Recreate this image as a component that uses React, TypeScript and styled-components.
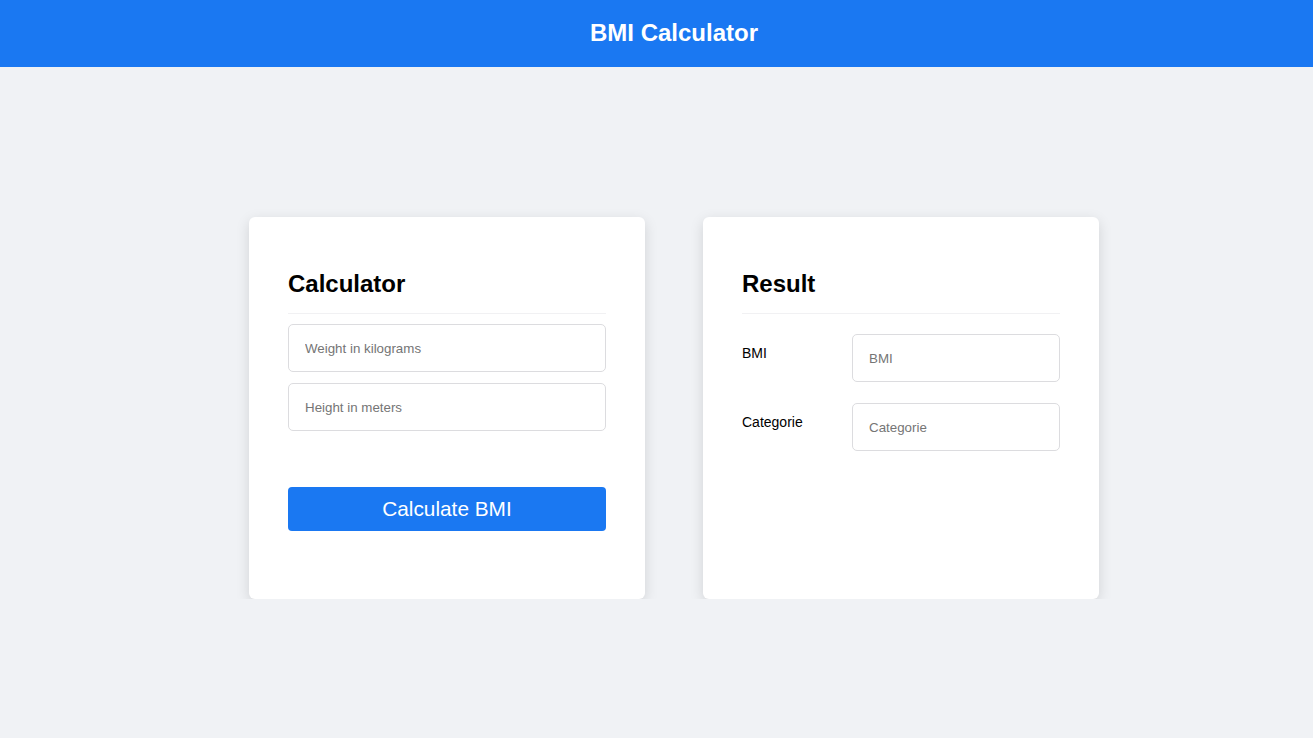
import React from "react";
import styled, { createGlobalStyle } from "styled-components";

const GlobalStyle = createGlobalStyle`
  html, body {
    margin: 0;
    padding: 0;
    background: #f0f2f5;
    font-family: "Liberation Sans", Arial, sans-serif;
  }
  * { box-sizing: border-box; }
`;

const Header = styled.header`
  height: 67px;
  background: #1a78f2;
  display: flex;
  align-items: center;
  justify-content: center;
  padding-left: 35px;
  padding-bottom: 2px;
`;

const HeaderTitle = styled.h1`
  margin: 0;
  color: #ffffff;
  font-size: 24px;
  font-weight: 700;
  line-height: 28px;
`;

const Main = styled.main`
  display: flex;
  justify-content: center;
  gap: 58px;
  padding: 150px 0 0 35px;
`;

const Card = styled.section`
  width: 396px;
  height: 382px;
  background: #ffffff;
  border-radius: 6px;
  box-shadow: 0 4px 14px rgba(0, 0, 0, 0.13);
  padding: 0 39px;
  display: flex;
  flex-direction: column;
`;

const CardTitle = styled.h2`
  margin: 0;
  padding: 53px 0 15px;
  border-bottom: 1px solid #f1f1f3;
  font-size: 24px;
  line-height: 28px;
  font-weight: 700;
  color: #000;
`;

const InputStack = styled.div`
  display: flex;
  flex-direction: column;
  gap: 11px;
  margin-top: 10px;
`;

const Field = styled.input`
  width: 100%;
  height: 48px;
  border: 1px solid #dcdcdf;
  border-radius: 5px;
  padding: 0 16px;
  font-family: "Liberation Sans", Arial, sans-serif;
  font-size: 13.333px;
  color: #222;
  background: #fff;
  outline: none;
  &::placeholder {
    color: #757575;
  }
`;

const Button = styled.button`
  margin-top: 56px;
  width: 100%;
  height: 44px;
  border: none;
  border-radius: 4px;
  background: #1a78f2;
  color: #ffffff;
  font-family: "Liberation Sans", Arial, sans-serif;
  font-size: 20.8px;
  cursor: pointer;
`;

const ResultGrid = styled.div`
  display: grid;
  grid-template-columns: 110px 208px;
  row-gap: 21px;
  margin-top: 20px;
`;

const Label = styled.label`
  padding-top: 11px;
  font-size: 14px;
  line-height: 16px;
  font-weight: 500;
  color: #000;
`;

export default function App() {
  return (
    <>
      <GlobalStyle />
      <Header>
        <HeaderTitle>BMI Calculator</HeaderTitle>
      </Header>
      <Main>
        <Card>
          <CardTitle>Calculator</CardTitle>
          <InputStack>
            <Field placeholder="Weight in kilograms" />
            <Field placeholder="Height in meters" />
          </InputStack>
          <Button>Calculate BMI</Button>
        </Card>
        <Card>
          <CardTitle>Result</CardTitle>
          <ResultGrid>
            <Label>BMI</Label>
            <Field placeholder="BMI" readOnly />
            <Label>Categorie</Label>
            <Field placeholder="Categorie" readOnly />
          </ResultGrid>
        </Card>
      </Main>
    </>
  );
}
